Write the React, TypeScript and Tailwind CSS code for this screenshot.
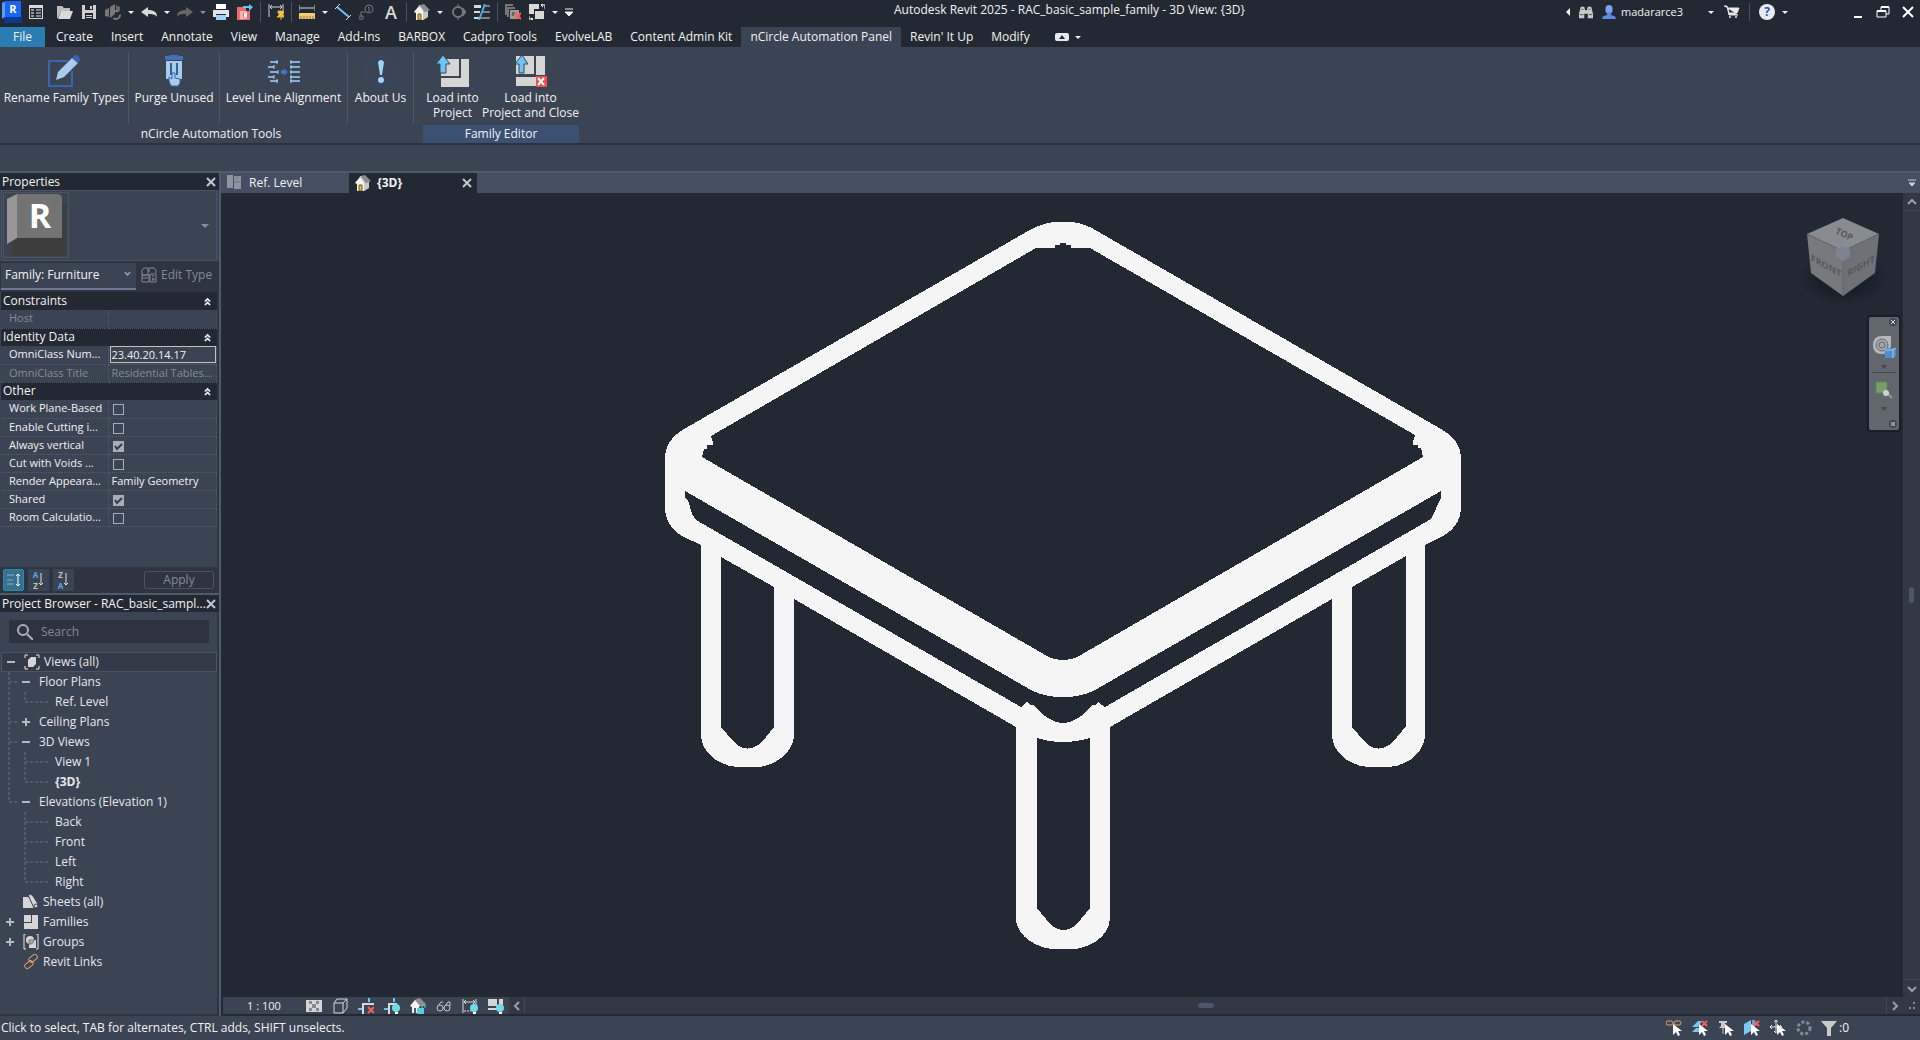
import { ReactNode, useState } from "react";

interface IconProps {
    children: ReactNode;
    box?: string;
    className?: string;
}

function Icon({
    children,
    box = "0 0 16 16",
    className = "w-4 h-4",
}: IconProps) {
    return (
        <svg
            viewBox={box}
            className={`shrink-0 ${className}`}
            fill="none"
            aria-hidden="true"
        >
            {children}
        </svg>
    );
}

const cursor = <path d="M7 4v11l3-3 2 4 2-1-2-4h4z" fill="#fff" />;
const redCross = (
    <path d="M10 9l6 6M16 9l-6 6" stroke="#f4605f" strokeWidth="2" />
);

const HouseIcon = () => (
    <Icon>
        <path d="M0 8l6-7 4-1 6 6-2 1v6l-5 3H3V8z" fill="#8c8c8c" />
        <path d="M0 8l5-6 5 6-1 1v7H2V9z" fill="#f2f2f2" />
        <path d="M5 1l5 7 1 1" stroke="#d5d5d5" />
        <path d="M9 9l5-2v6l-5 3z" fill="#c9c9c9" />
        <path d="M4 10h3v6H4z" fill="#e5b53c" stroke="#6d5a2a" />
    </Icon>
);

const DimensionIcon = () => (
    <>
        <path d="M1 1v14M14 1v7M2 4h11" stroke="#d9d9d9" />
        <path d="M4 2L2 4l2 2M11 2l2 2-2 2" stroke="#d9d9d9" />
    </>
);

const Bulb = () => (
    <>
        <circle cx="12" cy="10" r="4" fill="#6fdbe8" />
        <path d="M11 14h3v2h-3z" fill="#fff" />
    </>
);

type ToolbarItem =
    | { kind: "button"; label: string; icon: ReactNode }
    | { kind: "menu"; label: string; dim?: boolean }
    | { kind: "separator" };

const quickAccess: ToolbarItem[] = [
    {
        kind: "button",
        label: "Open",
        icon: (
            <Icon>
                <path d="M0 2h5l2 2h6v3H4l-3 7H0z" fill="#bdbdbd" />
                <path d="M4 7h12l-3 8H1z" fill="#d9d9d9" />
            </Icon>
        ),
    },
    {
        kind: "button",
        label: "Save",
        icon: (
            <Icon>
                <path d="M1 1h14v14H1z" fill="#d0d0d0" />
                <path d="M4 1h8v5H4zM4 9h8v6H4z" fill="#222933" />
                <path d="M9 2h2v3H9zM5 11h6v1H5zM5 13h6v1H5z" fill="#d0d0d0" />
            </Icon>
        ),
    },
    {
        kind: "button",
        label: "Synchronize",
        icon: (
            <Icon>
                <path d="M0 6l4-2v9l-4-1zM5 3l5-3v10l-5 4z" fill="#777" />
                <path d="M11 1l4 2v4h-4z" fill="#666" />
                <circle
                    cx="11"
                    cy="11"
                    r="4"
                    stroke="#7b7b7b"
                    strokeWidth="2"
                    strokeDasharray="9 3"
                />
            </Icon>
        ),
    },
    { kind: "menu", label: "Synchronize options" },
    {
        kind: "button",
        label: "Undo",
        icon: (
            <Icon>
                <path
                    d="M0 8l7-5v3c6 0 9 2 9 7-2-3-5-3-9-3v3z"
                    fill="#d9d9d9"
                />
            </Icon>
        ),
    },
    { kind: "menu", label: "Undo history" },
    {
        kind: "button",
        label: "Redo",
        icon: (
            <Icon>
                <path d="M16 8L9 3v3c-6 0-9 2-9 7 2-3 5-3 9-3v3z" fill="#666" />
            </Icon>
        ),
    },
    { kind: "menu", label: "Redo history", dim: true },
    {
        kind: "button",
        label: "Print",
        icon: (
            <Icon>
                <path d="M3 0h10v5H3z" fill="#fff" />
                <path d="M0 6h16v7h-3v-3H3v3H0z" fill="#e4e4e4" />
                <path d="M3 11h10v5H3z" fill="#9cd3f8" />
            </Icon>
        ),
    },
    {
        kind: "button",
        label: "Export PDF",
        icon: (
            <Icon>
                <path d="M0 3h9v4h4v9H0z" fill="#f0696b" />
                <path d="M3 8h7M3 10h3M3 12h3M3 14h7" stroke="#fff" />
                <path d="M7 9h3v4H7z" fill="#fff" />
                <path d="M6 2h6V0l4 3-4 4V4H6z" fill="#6cc4f7" />
            </Icon>
        ),
    },
    { kind: "separator" },
    {
        kind: "button",
        label: "Pin dimension",
        icon: (
            <Icon>
                <path d="M1 0v13M15 0v6M2 3h12" stroke="#d0d0d0" />
                <path d="M4 1L2 3l2 2M12 1l2 2-2 2" stroke="#d0d0d0" />
                <path d="M10 7h6v2h-1v2l2 2h-8l2-2V9h-1zM13 12v4" fill="#f3c04e" stroke="#e5b040" />
            </Icon>
        ),
    },
    { kind: "separator" },
    {
        kind: "button",
        label: "Measure",
        icon: (
            <Icon>
                <path d="M0 1v6M16 1v6M1 4h14" stroke="#d9d9d9" />
                <path d="M0 9h16v6H0z" fill="#f4ca72" />
                <path
                    d="M2 12v3M5 12v3M8 12v3M11 12v3M14 12v3"
                    stroke="#8b7347"
                />
            </Icon>
        ),
    },
    { kind: "menu", label: "Measure options" },
    {
        kind: "button",
        label: "Aligned dimension",
        icon: (
            <Icon>
                <path d="M2 3l12 10" stroke="#6cc4f7" strokeWidth="2" />
                <path d="M0 5l5-5M11 16l5-5" stroke="#e0e0e0" />
            </Icon>
        ),
    },
    {
        kind: "button",
        label: "Tag by category",
        icon: (
            <Icon>
                <circle cx="10" cy="5" r="4" stroke="#777" />
                <path d="M9 4l1-1v5M6 8H2v5M0 12h4v3H0z" stroke="#777" />
            </Icon>
        ),
    },
    {
        kind: "button",
        label: "Text",
        icon: (
            <span className="text-lg leading-4 font-semibold text-[#d9d9d9]">
                A
            </span>
        ),
    },
    { kind: "separator" },
    { kind: "button", label: "Default 3D view", icon: <HouseIcon /> },
    { kind: "menu", label: "3D view options" },
    {
        kind: "button",
        label: "Section",
        icon: (
            <Icon>
                <circle cx="8" cy="8" r="5" stroke="#777" strokeWidth="2" />
                <path d="M8 0v3M8 13v3M13 4l3 4-3 4z" fill="#777" stroke="#777" />
            </Icon>
        ),
    },
    {
        kind: "button",
        label: "Thin lines",
        icon: (
            <Icon>
                <path d="M0 1h7v3H0zM0 7h6v2H0zM0 13h5v2H0z" fill="#d9d9d9" />
                <path d="M9 2h7M8 8h8M6 14h10" stroke="#d9d9d9" />
                <path d="M11 0L5 16" stroke="#4aa8e8" strokeWidth="2" />
            </Icon>
        ),
    },
    { kind: "separator" },
    {
        kind: "button",
        label: "Close inactive views",
        icon: (
            <Icon>
                <path d="M1 11V1h7M3 13V4h7" stroke="#777" strokeWidth="2" />
                <path d="M5 6h9v9H5z" fill="#9a9a9a" />
                <path d="M7 9h3M7 11h2" stroke="#333" />
                {redCross}
            </Icon>
        ),
    },
    {
        kind: "button",
        label: "Switch windows",
        icon: (
            <Icon>
                <path d="M0 0h10v5H5v5H0z" fill="#d9d9d9" />
                <path d="M6 7h9v8H6z" fill="#d9d9d9" />
                <path d="M12 1h4v4M14 0l-2 1 2 2M0 12v3h4M2 14l2 1-2 1" stroke="#fff" />
            </Icon>
        ),
    },
    { kind: "menu", label: "Window list" },
];

const ribbonTabs = [
    "Create",
    "Insert",
    "Annotate",
    "View",
    "Manage",
    "Add-Ins",
    "BARBOX",
    "Cadpro Tools",
    "EvolveLAB",
    "Content Admin Kit",
    "nCircle Automation Panel",
    "Revin' It Up",
    "Modify",
];

const automationTools = [
    {
        label: "Rename Family Types",
        width: "w-[129px]",
        icon: (
            <Icon box="0 0 32 32" className="w-8 h-8">
                <path
                    d="M20 6H1v25h23V16"
                    stroke="#3a63b0"
                    strokeWidth="2"
                />
                <path d="M8 25l2-8L24 3l6 5-14 14z" fill="#a8cdec" />
                <path d="M24 3l3-3c3 0 5 2 5 5l-2 3z" fill="#3a63b0" />
            </Icon>
        ),
    },
    {
        label: "Purge Unused",
        width: "w-[91px]",
        icon: (
            <Icon box="0 0 32 32" className="w-8 h-8">
                <path d="M7 1h4l1-1h8l1 1h4v4H7z" fill="#4470bd" />
                <path d="M8 6h16v18H8z" fill="#a8cdec" />
                <path d="M13 8v12M19 8v12" stroke="#3b5f92" strokeWidth="2" />
                <path
                    d="M13 31l-2-5v-4l3 2v-6h3v5l5 1v4l-2 3z"
                    fill="#a8cdec"
                    stroke="#3a63b0"
                />
            </Icon>
        ),
    },
    {
        label: "Level Line Alignment",
        width: "w-[128px]",
        icon: (
            <Icon box="0 0 32 32" className="w-8 h-8">
                <path
                    d="M2 7h8M0 12h6M2 17h8M0 22h6M2 26h8M22 7h10M22 12h10M22 17h10M22 22h10M22 26h10"
                    stroke="#84aed6"
                    strokeWidth="2"
                />
                <path
                    d="M9 5v4M6 10v4M10 15v4M6 20v4M9 24v4M23 5v4M23 10v4M23 15v4M23 20v4M23 24v4"
                    stroke="#a8cdec"
                />
                <path d="M13 15h3v-2l4 4-4 4v-2h-3z" fill="#4470bd" />
            </Icon>
        ),
    },
    {
        label: "About Us",
        width: "w-[66px]",
        icon: (
            <Icon box="0 0 32 32" className="w-8 h-8">
                <circle cx="16" cy="16" r="14" stroke="#2c4a80" />
                <path d="M13 7q3-4 6 0l-2 13h-2z" fill="#9fd4f7" />
                <circle cx="16" cy="25" r="3" fill="#9fd4f7" />
            </Icon>
        ),
    },
];

const familyTools = [
    {
        lines: ["Load into", "Project"],
        width: "w-[59px]",
        icon: (
            <Icon box="0 0 32 32" className="w-8 h-8">
                <path d="M4 4h18v17H4zM24 4h8v28H4v-9h20z" fill="#d5d5d5" />
                <path
                    d="M6 0l7 9H9v9H3V9h-4z"
                    fill="#6cc4f7"
                    stroke="#3b4453"
                />
            </Icon>
        ),
    },
    {
        lines: ["Load into", "Project and Close"],
        width: "w-[97px]",
        icon: (
            <Icon box="0 0 32 32" className="w-8 h-8">
                <path d="M1 1h18v18H1zM21 1h9v19h-9zM1 22h20v9H1z" fill="#d5d5d5" />
                <path
                    d="M7 0l6 9H9v9H4V9H0z"
                    fill="#6cc4f7"
                    stroke="#3b4453"
                />
                <path d="M21 21h11v11H21z" fill="#f04e4a" />
                <path d="M23 23l6 7M29 23l-6 7" stroke="#fff" strokeWidth="2" />
            </Icon>
        ),
    },
];

type Property = {
    name: string;
    value?: string;
    checked?: boolean;
    kind: "text" | "edit" | "readonly" | "check";
};

const propertyGroups: { title: string; rows: Property[] }[] = [
    {
        title: "Constraints",
        rows: [{ name: "Host", value: "", kind: "readonly" }],
    },
    {
        title: "Identity Data",
        rows: [
            { name: "OmniClass Num...", value: "23.40.20.14.17", kind: "edit" },
            {
                name: "OmniClass Title",
                value: "Residential Tables...",
                kind: "readonly",
            },
        ],
    },
    {
        title: "Other",
        rows: [
            { name: "Work Plane-Based", kind: "check" },
            { name: "Enable Cutting i...", kind: "check" },
            { name: "Always vertical", kind: "check", checked: true },
            { name: "Cut with Voids ...", kind: "check" },
            { name: "Render Appeara...", value: "Family Geometry", kind: "text" },
            { name: "Shared", kind: "check", checked: true },
            { name: "Room Calculatio...", kind: "check" },
        ],
    },
];

const viewNodes: {
    label: string;
    level: 1 | 2;
    last?: boolean;
    inside?: boolean;
    open?: boolean;
    bold?: boolean;
}[] = [
    { label: "Floor Plans", level: 1, open: true },
    { label: "Ref. Level", level: 2, last: true, inside: true },
    { label: "Ceiling Plans", level: 1, open: false },
    { label: "3D Views", level: 1, open: true },
    { label: "View 1", level: 2, inside: true },
    { label: "{3D}", level: 2, last: true, inside: true, bold: true },
    { label: "Elevations (Elevation 1)", level: 1, last: true, open: true },
    { label: "Back", level: 2 },
    { label: "Front", level: 2 },
    { label: "Left", level: 2 },
    { label: "Right", level: 2, last: true },
];

const otherNodes: { label: string; expandable: boolean; icon: ReactNode }[] = [
    {
        label: "Sheets (all)",
        expandable: false,
        icon: (
            <Icon>
                <path d="M0 3h5l9 8v3H0z" fill="#d5d5d5" />
                <path d="M5 1q3-2 5 1l5 8v4h-4z" fill="#d5d5d5" stroke="#3b4453" />
                <circle cx="13" cy="12" r="2" stroke="#3b4453" />
            </Icon>
        ),
    },
    {
        label: "Families",
        expandable: true,
        icon: (
            <Icon>
                <path d="M1 1h7v7H1zM9 1h6v14H1V9h8z" fill="#d5d5d5" />
            </Icon>
        ),
    },
    {
        label: "Groups",
        expandable: true,
        icon: (
            <Icon>
                <path d="M3 0H1v15h2M13 0h2v15h-2" stroke="#e8e8e8" />
                <circle cx="7" cy="6" r="4" fill="#d5d5d5" />
                <path d="M6 6h7v8H6z" fill="#d5d5d5" />
                <path d="M6 6h5q0 3-3 4H6z" fill="#aaa" stroke="#777" />
            </Icon>
        ),
    },
    {
        label: "Revit Links",
        expandable: false,
        icon: (
            <Icon>
                <rect x="6" y="2" width="9" height="5" rx="2" stroke="#e0a070" transform="rotate(-40 10 5)" />
                <rect x="1" y="8" width="9" height="5" rx="2" stroke="#e0a070" transform="rotate(-40 6 10)" />
            </Icon>
        ),
    },
];

const viewControls = [
    {
        label: "Detail level",
        icon: (
            <Icon>
                <path d="M0 2h16v12H0z" fill="#d5d5d5" />
                <path d="M3 3h3v3H3zM10 3h3v3h-3zM6 6h4v4H6zM3 10h3v3H3zM10 10h3v3h-3z" fill="#888" />
            </Icon>
        ),
    },
    {
        label: "Visual style",
        icon: (
            <Icon>
                <path d="M2 5h9v10H2zM2 5l3-4h10v9l-4 5M11 5l4-4" stroke="#d9d9d9" />
            </Icon>
        ),
    },
    {
        label: "Crop view",
        icon: (
            <Icon>
                <path d="M5 16V6h11" stroke="#d9d9d9" strokeWidth="2" />
                <path d="M0 11h4M11 0v4" stroke="#6cc4f7" strokeWidth="2" />
                {redCross}
            </Icon>
        ),
    },
    {
        label: "Show crop region",
        icon: (
            <Icon>
                <path d="M5 16V6h8" stroke="#d9d9d9" strokeWidth="2" />
                <path d="M0 11h4M10 0v4" stroke="#6cc4f7" strokeWidth="2" />
                <Bulb />
            </Icon>
        ),
    },
    {
        label: "Locked 3D view",
        icon: (
            <Icon>
                <path d="M0 8l6-7 4-1 6 6-2 2z" fill="#8c8c8c" />
                <path d="M0 8l5-6 5 6-1 1v6H2V9z" fill="#f2f2f2" />
                <path d="M4 10h2v5H4z" fill="#555" />
                <path d="M7 10h7v6H7z" fill="#5ccbe0" />
                <path d="M12 10V7h3v3" stroke="#5ccbe0" />
            </Icon>
        ),
    },
    {
        label: "Temporary hide",
        icon: (
            <Icon>
                <circle cx="4" cy="10" r="3" stroke="#c8c8c8" />
                <circle cx="11" cy="10" r="3" stroke="#c8c8c8" />
                <path d="M2 8l3-4h2M9 8l3-4h2v4M7 10h1" stroke="#c8c8c8" />
            </Icon>
        ),
    },
    {
        label: "Reveal constraints",
        icon: (
            <Icon>
                <DimensionIcon />
                <path d="M2 13h7" stroke="#d9d9d9" strokeDasharray="2 1" />
                <Bulb />
            </Icon>
        ),
    },
    {
        label: "Preview visibility",
        icon: (
            <Icon>
                <path d="M0 1h9v7H0zM11 1h4v7h-4zM0 10h9v2H0z" fill="#d5d5d5" />
                <Bulb />
            </Icon>
        ),
    },
];

const selectionControls = [
    {
        label: "Select links",
        icon: (
            <Icon>
                <rect x="0" y="1" width="7" height="4" rx="2" stroke="#e0a070" />
                <rect x="8" y="1" width="7" height="4" rx="2" stroke="#e0a070" />
                {cursor}
            </Icon>
        ),
    },
    {
        label: "Select underlay elements",
        icon: (
            <Icon>
                <path d="M0 7l6-6h4L6 7zM0 12l4-4h8l-4 4z" fill="#7cc8f4" />
                <path d="M10 1l5 5M15 1l-5 5" stroke="#f4605f" strokeWidth="2" />
                {cursor}
            </Icon>
        ),
    },
    {
        label: "Select pinned elements",
        icon: (
            <Icon>
                <path d="M1 1h8v2H7v3l2 2H1l2-2V3H1z" fill="#c9c9c9" />
                <path d="M5 8v6" stroke="#c9c9c9" />
                {cursor}
            </Icon>
        ),
    },
    {
        label: "Select by face",
        icon: (
            <Icon>
                <path d="M0 4l7-4v11l-7 4z" fill="#7cc8f4" />
                <path d="M8 0h3v9H8z" fill="#5da8d6" />
                <path d="M10 1l5 5M15 1l-5 5" stroke="#f4605f" strokeWidth="2" />
                {cursor}
            </Icon>
        ),
    },
    {
        label: "Drag on selection",
        icon: (
            <Icon>
                <path d="M6 0v13M0 7h12M4 2l2-2 2 2M4 11l2 2M2 5L0 7l2 2M10 5l2 2" stroke="#e8e8e8" />
                {cursor}
            </Icon>
        ),
    },
    {
        label: "Background processes",
        icon: (
            <Icon>
                <circle cx="8" cy="8" r="6" stroke="#858b95" strokeWidth="3" strokeDasharray="3 2" />
            </Icon>
        ),
    },
];

// Closed outlines of the table edges; the inner loops are cut out by the even-odd rule
const tablePath = [
    "M403 12H423Q436 14 447 21L791 219Q811 230 811 249V296Q811 317 791 327L775 335V524C775 545 753 557 738 557H719C704 557 682 545 682 524V389L460 517V708C460 727 438 739 422 739H404C389 739 366 727 366 708V517L144 389V524C144 545 121 557 107 557H88C73 557 51 545 51 524V335L34 327Q15 317 15 296V249Q15 230 34 219L378 21Q390 14 403 12Z",
    "M386 38H405V35H410V33H416V35H421V38H440L765 225L763 232V235H768V238H771L773 247L429 446Q413 454 397 446L52 247L54 239H57V235H63V232L61 226Z",
    "M35 281L381 480Q394 487 413 487Q432 487 445 480L791 281V288L781 309L455 497L448 492L445 495H442L437 501Q424 513 413 513Q402 513 389 501L384 495H380L377 492L371 497L46 310L42 304L38 290L35 288Z",
    "M71 347L124 377V517L112 532Q97 545 84 532L71 517Z",
    "M387 528Q413 536 440 528V698L427 714Q413 726 400 714L387 698Z",
    "M702 377L756 346V516L743 532Q728 545 715 532L702 517Z",
].join("");

function Caret({ dim = false }: { dim?: boolean }) {
    return (
        <Icon box="0 0 8 4" className="w-[6px] h-[3px]">
            <path d="M0 0h8L4 4z" fill={dim ? "#8a8f96" : "#f0f0f0"} />
        </Icon>
    );
}

function CloseIcon() {
    return (
        <Icon box="0 0 10 10" className="w-[10px] h-[10px]">
            <path d="M1 1l8 8M9 1L1 9" stroke="#c3c8cf" strokeWidth="2" />
        </Icon>
    );
}

function AppLogo() {
    return (
        <svg viewBox="0 0 24 24" className="w-6 h-6 shrink-0">
            <path d="M4 14h18v9H4z" fill="#0a3a8c" />
            <path d="M2 3l4-2v15l-4 3z" fill="#5a9bf8" />
            <path d="M5 1h16v16H5z" fill="#1a66f0" />
            <text
                x="13"
                y="13"
                textAnchor="middle"
                fontSize="11"
                fontWeight="700"
                fill="#fff"
            >
                R
            </text>
        </svg>
    );
}

function TitleBar() {
    return (
        <header className="flex h-[27px] items-center pb-[3px]">
            <AppLogo />
            <button
                aria-label="Home"
                className="flex w-6 mr-[5px] justify-center"
            >
                <Icon>
                    <path d="M1 1h14v14H1z" fill="#d9d9d9" />
                    <path d="M2 4h12v10H2z" fill="#222933" />
                    <path d="M3 5h3v2H3zM3 8h3v2H3zM3 11h3v2H3z" fill="#999" />
                    <path d="M8 6h5M8 9h5M8 12h5" stroke="#e8e8e8" />
                </Icon>
            </button>
            {quickAccess.map((item, index) => {
                if (item.kind === "separator") {
                    return (
                        <span
                            key={index}
                            className="flex w-[7px] justify-center"
                        >
                            <span className="w-px h-5 bg-[#46505f]"></span>
                        </span>
                    );
                }
                if (item.kind === "menu") {
                    return (
                        <button
                            key={index}
                            aria-label={item.label}
                            className="flex w-3 h-4 items-center justify-center"
                        >
                            <Caret dim={item.dim} />
                        </button>
                    );
                }
                return (
                    <button
                        key={index}
                        aria-label={item.label}
                        className="flex w-6 h-5 items-center justify-center"
                    >
                        {item.icon}
                    </button>
                );
            })}
            <button
                aria-label="Customize toolbar"
                className="flex w-4 justify-center"
            >
                <Icon box="0 0 8 8" className="w-2 h-2">
                    <path d="M0 1h8M0 4h8L4 8z" fill="#f0f0f0" stroke="#f0f0f0" />
                </Icon>
            </button>
            <h1 className="flex-1 pb-1 text-center text-xs">
                Autodesk Revit 2025 - RAC_basic_sample_family - 3D View: {"{3D}"}
            </h1>
            <div className="flex items-center">
                <button aria-label="Collapse" className="flex w-3 justify-center">
                    <Icon box="0 0 4 8" className="w-1 h-2">
                        <path d="M4 0v8L0 4z" fill="#f0f0f0" />
                    </Icon>
                </button>
                <button aria-label="Search" className="flex w-6 justify-center">
                    <Icon className="w-[14px] h-[14px]">
                        <path d="M2 2h4l1 4h2l1-4h4l2 8v5h-6v-5H6v5H0v-5z" fill="#c9c9c9" />
                        <path d="M3 5h2M11 5h2M1 11h4M11 11h4" stroke="#444" />
                    </Icon>
                </button>
                <button className="flex items-center gap-[5px] pl-1">
                    <Icon className="w-[14px] h-[14px]">
                        <rect x="4" y="0" width="8" height="10" rx="4" fill="#7ba2f5" />
                        <path d="M0 16l1-3 5-2V8h4v3l5 2 1 3z" fill="#5f88e8" />
                    </Icon>
                    <span className="w-[62px] text-left text-[11px] whitespace-nowrap">
                        madararce3
                    </span>
                    <span className="flex w-[34px] justify-end pr-2">
                        <Caret />
                    </span>
                </button>
                <button aria-label="Store" className="flex w-5 justify-center">
                    <Icon>
                        <path d="M0 2h3l2 9h9M4 4h11l-2 5H5z" fill="#e8e8e8" stroke="#e8e8e8" />
                        <circle cx="6" cy="13" r="1" fill="#e8e8e8" />
                        <circle cx="12" cy="13" r="1" fill="#e8e8e8" />
                    </Icon>
                </button>
                <span className="mx-[7px] w-px h-[18px] bg-[#46505f]"></span>
                <button aria-label="Help" className="ml-[2px] flex w-4 h-4 items-center justify-center rounded-full bg-[#e8ebf0] text-xs font-bold text-[#2456b8]">
                    ?
                </button>
                <button aria-label="Help options" className="flex w-5 justify-center">
                    <Caret />
                </button>
            </div>
            <div className="flex ml-[50px]">
                <button aria-label="Minimize" className="flex w-[25px] h-4 justify-center">
                    <Icon>
                        <path d="M4 13h8" stroke="#fff" strokeWidth="2" />
                    </Icon>
                </button>
                <button aria-label="Restore" className="flex w-[25px] h-4 justify-center">
                    <Icon>
                        <path d="M6 6V3h8v7h-3M2 7h9v6H2z" stroke="#fff" strokeWidth="1" />
                        <path d="M6 3h8M2 7h9" stroke="#fff" strokeWidth="2" />
                    </Icon>
                </button>
                <button aria-label="Close" className="flex w-[25px] h-4 justify-center">
                    <Icon>
                        <path d="M3 3l10 10M13 3L3 13" stroke="#fff" strokeWidth="2" />
                    </Icon>
                </button>
            </div>
        </header>
    );
}

function RibbonTabs() {
    const [active, setActive] = useState("nCircle Automation Panel");

    return (
        <nav className="flex h-5 text-[12px] leading-5">
            <button className="w-[45px] mr-[2px] bg-[#2a7db3]">File</button>
            {ribbonTabs.map((tab) => (
                <button
                    key={tab}
                    onClick={() => setActive(tab)}
                    className={`px-[9px] whitespace-nowrap ${
                        tab === active ? "bg-[#3b4453]" : ""
                    }`}
                >
                    {tab}
                </button>
            ))}
            <button
                aria-label="Minimize ribbon"
                className="flex items-center gap-[6px] ml-4"
            >
                <Icon box="0 0 14 8" className="w-[14px] h-2">
                    <rect width="14" height="8" rx="2" fill="#e8e8f0" />
                    <path d="M4 6l3-4 3 4z" fill="#222933" />
                </Icon>
                <Caret />
            </button>
        </nav>
    );
}

function Ribbon() {
    return (
        <div className="flex h-[98px] border-b-2 border-[#2b323d] bg-[#3b4453] pt-1">
            <section className="flex flex-col">
                <div className="flex h-[74px] py-px">
                    {automationTools.map((tool) => (
                        <button
                            key={tool.label}
                            className={`flex flex-col items-center pt-[3px] border-r border-[#4d5767] whitespace-nowrap text-[12px] leading-[15px] ${tool.width}`}
                        >
                            {tool.icon}
                            <span className="mt-[3px]">{tool.label}</span>
                        </button>
                    ))}
                </div>
                <h2 className="pl-2 text-center text-[12px] leading-[17px]">
                    nCircle Automation Tools
                </h2>
            </section>
            <section className="flex flex-col ml-[9px]">
                <div className="flex h-[74px] py-px">
                    {familyTools.map((tool) => (
                        <button
                            key={tool.lines[1]}
                            className={`flex flex-col items-center pt-[3px] whitespace-nowrap text-[12px] leading-[15px] ${tool.width}`}
                        >
                            {tool.icon}
                            <span className="mt-[3px]">{tool.lines[0]}</span>
                            <span>{tool.lines[1]}</span>
                        </button>
                    ))}
                </div>
                <h2 className="bg-[#3b5172] text-center text-[12px] leading-[18px]">
                    Family Editor
                </h2>
            </section>
        </div>
    );
}

function PanelTitle({ children }: { children: ReactNode }) {
    return (
        <div className="flex h-[17px] shrink-0 items-center justify-between bg-[#222933] pl-[2px] pr-[3px]">
            <h2 className="text-[12px] leading-[17px] whitespace-nowrap">
                {children}
            </h2>
            <button aria-label="Close panel">
                <CloseIcon />
            </button>
        </div>
    );
}

function PropertyCheckbox({ row }: { row: Property }) {
    const [checked, setChecked] = useState(row.checked ?? false);

    return (
        <span className="relative block w-[11px] h-[11px] mt-1 ml-[3px]">
            <input
                type="checkbox"
                aria-label={row.name}
                checked={checked}
                onChange={(e) => setChecked(e.target.checked)}
                className="block w-[11px] h-[11px] appearance-none border border-[#a9adb8] checked:bg-[#a9adb8]"
            />
            {checked && (
                <svg
                    viewBox="0 0 11 11"
                    fill="none"
                    className="pointer-events-none absolute inset-0"
                >
                    <path d="M2 5l2 3 5-5" stroke="#333a47" strokeWidth="2" />
                </svg>
            )}
        </span>
    );
}

function PropertyValue({ row }: { row: Property }) {
    if (row.kind === "check") {
        return <PropertyCheckbox row={row} />;
    }
    if (row.kind === "edit") {
        return (
            <input
                aria-label={row.name}
                defaultValue={row.value}
                className="block w-full h-[17px] border border-[#c9c3ae] px-px text-[11px]"
            />
        );
    }
    return <span className="block pl-[2px]">{row.value}</span>;
}

function SortButton({
    first,
    second,
    label,
}: {
    first: string;
    second: string;
    label: string;
}) {
    return (
        <button
            aria-label={label}
            className="flex w-[21px] h-[22px] items-center justify-center bg-[#3b4453]"
        >
            <span className="flex flex-col text-[8px] leading-[11px] font-bold">
                <span className={first === "A" ? "text-[#5da8e0]" : "text-[#c0c0c0]"}>
                    {first}
                </span>
                <span className={second === "A" ? "text-[#5da8e0]" : "text-[#c0c0c0]"}>
                    {second}
                </span>
            </span>
            <Icon box="0 0 6 14" className="w-[6px] h-[14px]">
                <path d="M3 0v12M1 10l2 2 2-2" stroke="#e0e0e0" />
            </Icon>
        </button>
    );
}

function PropertiesPanel() {
    return (
        <section>
            <PanelTitle>Properties</PanelTitle>
            <div className="ml-px mr-[2px] flex h-[71px] items-start justify-between border border-[#4a5464] pl-px pr-[7px]">
                <div className="mt-px border border-[#4a5464]">
                    <svg viewBox="0 0 64 64" className="w-16 h-16">
                        <path d="M8 12h54v50q0 1-1 1H10q-2 0-2-2z" fill="#3d3d3d" />
                        <path d="M3 6l10-5v44L3 51z" fill="#979797" />
                        <path d="M13 1h40q5 0 5 5v39H13z" fill="#737373" />
                        <text
                            x="36"
                            y="35"
                            textAnchor="middle"
                            fontSize="34"
                            fontWeight="700"
                            fill="#fff"
                        >
                            R
                        </text>
                    </svg>
                </div>
                <button aria-label="Type selector" className="self-center">
                    <Icon box="0 0 8 4" className="w-2 h-1">
                        <path d="M0 0h8L4 4z" fill="#7f8fa6" />
                    </Icon>
                </button>
            </div>
            <div className="flex h-[31px] bg-[#2e3541]">
                <div className="relative ml-px h-[27px] w-[135px]">
                    <select
                        aria-label="Family"
                        className="h-full w-full appearance-none border-b-2 border-[#6d7b8e] bg-[#3b4453] pl-1 text-[12px]"
                    >
                        <option>Family: Furniture</option>
                    </select>
                    <Icon
                        box="0 0 8 6"
                        className="pointer-events-none absolute right-[5px] top-[10px] w-[7px] h-[6px]"
                    >
                        <path d="M1 1l3 3 3-3" stroke="#8fa0b8" strokeWidth="2" />
                    </Icon>
                </div>
                <button
                    disabled
                    className="flex flex-1 items-center gap-1 pl-[5px] pb-1 text-[12px] text-[#858a93] whitespace-nowrap"
                >
                    <Icon>
                        <path d="M1 8V3l2-2h4v7zM8 5V1h5l2 2v3M1 8h7v7H1zM1 11h6M9 7h6v8H9z" stroke="#858a93" />
                        <path d="M11 9h2M12 11v3M11 12h3" stroke="#858a93" />
                    </Icon>
                    Edit Type
                </button>
            </div>
            <div className="h-[275px] border-r-2 border-[#2e3541] bg-[#3b4453] pl-px">
                <table className="w-full table-fixed border-collapse text-[11px] leading-[16px]">
                    <colgroup>
                        <col className="w-[107px]" />
                        <col />
                    </colgroup>
                    {propertyGroups.map((group) => (
                        <tbody key={group.title}>
                            <tr className="h-[18px] bg-[#222933]">
                                <th
                                    colSpan={2}
                                    className="p-0 pl-[2px] text-left text-[12px] font-normal"
                                >
                                    <div className="flex items-center justify-between pr-[6px]">
                                        {group.title}
                                        <button aria-label="Collapse group">
                                            <Icon box="0 0 8 10" className="w-[7px] h-[9px]">
                                                <path d="M1 5l3-3 3 3M1 9l3-3 3 3" stroke="#f0f0f0" strokeWidth="2" />
                                            </Icon>
                                        </button>
                                    </div>
                                </th>
                            </tr>
                            {group.rows.map((row) => (
                                <tr
                                    key={row.name}
                                    className={`h-[18px] ${
                                        row.kind === "readonly"
                                            ? "text-[#868c96]"
                                            : ""
                                    }`}
                                >
                                    <td className="border-r border-b border-dotted border-[#525c6b] p-0 pl-2 align-top whitespace-nowrap">
                                        {row.name}
                                    </td>
                                    <td className="border-r border-b border-dotted border-[#525c6b] p-0 pl-px align-top whitespace-nowrap">
                                        <PropertyValue row={row} />
                                    </td>
                                </tr>
                            ))}
                        </tbody>
                    ))}
                </table>
            </div>
            <div className="flex h-[26px] items-center gap-1 bg-[#2e3541] pl-[3px] pr-[5px]">
                <button
                    aria-label="Sort by group"
                    className="flex w-[21px] h-[22px] items-center justify-center rounded-xs border border-[#2f86b0] bg-[#36718f]"
                >
                    <Icon>
                        <path d="M1 3h7M1 8h6M1 12h7" stroke="#8fb0c0" />
                        <path d="M12 2v12M10 4l2-2 2 2M10 12l2 2 2-2" stroke="#fff" />
                    </Icon>
                </button>
                <SortButton first="A" second="Z" label="Sort ascending" />
                <SortButton first="Z" second="A" label="Sort descending" />
                <button
                    disabled
                    className="ml-auto h-[18px] w-[70px] rounded-xs border border-[#4a5464] text-[12px] leading-4 text-[#858a93]"
                >
                    Apply
                </button>
            </div>
        </section>
    );
}

function Toggle({ open }: { open: boolean }) {
    return (
        <button
            aria-label={open ? "Collapse" : "Expand"}
            className="flex w-[10px] h-[10px]"
        >
            <Icon box="0 0 10 10" className="w-[10px] h-[10px]">
                <path
                    d={open ? "M1 5h8" : "M1 5h8M5 1v8"}
                    stroke="#b4b9c2"
                    strokeWidth="2"
                />
            </Icon>
        </button>
    );
}

function ProjectBrowser() {
    return (
        <section className="flex min-h-0 flex-1 flex-col border-t-2 border-[#4f5b6a]">
            <PanelTitle>Project Browser - RAC_basic_sampl...</PanelTitle>
            <div className="flex min-h-0 flex-1 flex-col border-r-2 border-b-2 border-[#2e3541] pl-px">
                <label className="mx-2 mt-2 flex h-[23px] shrink-0 items-center bg-[#2d343f] pl-2">
                    <Icon>
                        <circle cx="6" cy="6" r="5" stroke="#a9adb8" strokeWidth="2" />
                        <path d="M10 10l6 6" stroke="#a9adb8" strokeWidth="2" />
                    </Icon>
                    <input
                        type="search"
                        placeholder="Search"
                        aria-label="Search project browser"
                        className="min-w-0 flex-1 pl-2 text-[12px] placeholder:text-[#858a93]"
                    />
                </label>
                <ul className="mt-[9px] text-[12px] leading-5 text-[#e6e8eb]">
                    <li className="flex h-5 items-center border border-[#4a5464] bg-[#343b48] pl-1">
                        <Toggle open />
                        <span className="flex ml-2 mr-1">
                            <Icon>
                                <path d="M4 1H1v3M12 1h3v3M4 15H1v-3M12 15h3v-3" stroke="#e8e8e8" />
                                <path d="M4 6l3-3h5v7l-3 3H4z" fill="#d5d5d5" />
                            </Icon>
                        </span>
                        Views (all)
                    </li>
                    {viewNodes.map((node) =>
                        node.level === 1 ? (
                            <li key={node.label} className="flex h-5 items-center">
                                <Icon box="0 0 20 20" className="w-5 h-5">
                                    <path
                                        d={node.last ? "M8 0v10h9" : "M8 0v20M8 10h9"}
                                        stroke="#68707d"
                                        strokeDasharray="3 2"
                                    />
                                </Icon>
                                <Toggle open={node.open ?? false} />
                                <span className="pl-2">{node.label}</span>
                            </li>
                        ) : (
                            <li key={node.label} className="flex h-5 items-center">
                                <Icon box="0 0 52 20" className="w-[52px] h-5">
                                    <path
                                        d={`${node.inside ? "M8 0v20" : ""}${
                                            node.last
                                                ? "M24 0v10h24"
                                                : "M24 0v20M24 10h24"
                                        }`}
                                        stroke="#68707d"
                                        strokeDasharray="3 2"
                                    />
                                </Icon>
                                <span
                                    className={`pl-[2px] ${
                                        node.bold ? "font-bold" : ""
                                    }`}
                                >
                                    {node.label}
                                </span>
                            </li>
                        )
                    )}
                    {otherNodes.map((node) => (
                        <li key={node.label} className="flex h-5 items-center pl-1">
                            <span className="flex w-[10px]">
                                {node.expandable && <Toggle open={false} />}
                            </span>
                            <span className="flex ml-2 mr-1">{node.icon}</span>
                            {node.label}
                        </li>
                    ))}
                </ul>
            </div>
        </section>
    );
}

function ViewTabs() {
    return (
        <div className="flex h-5 bg-[#454f61] text-[12px]">
            <button className="flex w-32 items-center pl-[6px]">
                <Icon>
                    <path d="M0 0h6v13H0zM7 1h7v13H7z" fill="#8f94a0" />
                    <path d="M10 1v3M7 7h7" stroke="#6a7180" />
                </Icon>
                <span className="pl-[6px]">Ref. Level</span>
            </button>
            <div className="flex w-32 items-center bg-[#222933] pl-[6px] pr-[5px]">
                <button className="flex flex-1 items-center gap-[6px] font-bold">
                    <HouseIcon />
                    {"{3D}"}
                </button>
                <button aria-label="Close view">
                    <CloseIcon />
                </button>
            </div>
            <button
                aria-label="Tab list"
                className="ml-auto flex w-4 items-center justify-center"
            >
                <Icon box="0 0 8 8" className="w-2 h-2">
                    <path d="M0 1h8M1 4h6L4 7z" fill="#c9cdd4" stroke="#c9cdd4" />
                </Icon>
            </button>
        </div>
    );
}

function ViewCube() {
    return (
        <svg
            viewBox="0 0 100 110"
            className="absolute right-[10px] top-[14px] w-[100px] h-[110px]"
        >
            <defs>
                <radialGradient id="shade">
                    <stop offset="0" stopColor="#10151c" />
                    <stop offset="1" stopColor="#222933" />
                </radialGradient>
            </defs>
            <ellipse cx="50" cy="72" rx="44" ry="26" fill="url(#shade)" />
            <path d="M50 11l36 16-36 17-36-17z" fill="#888b90" />
            <path d="M14 27l36 17v45L18 66z" fill="#77797d" />
            <path d="M86 27L50 44v45l32-23z" fill="#6e7175" />
            <path
                d="M14 27l36 17 36-17M50 44v45"
                fill="none"
                stroke="#5e6165"
                strokeDasharray="3 1"
            />
            <path d="M50 39l7 3v8l-7 4-7-4v-8z" fill="#7c8494" />
            <g fill="#55585d" fontWeight="700" textAnchor="middle">
                <text fontSize="9" transform="translate(50 30) rotate(25)">
                    TOP
                </text>
                <text fontSize="9" transform="translate(33 62) skewY(29)">
                    FRONT
                </text>
                <text fontSize="9" transform="translate(68 62) skewY(-29)">
                    RIGHT
                </text>
            </g>
        </svg>
    );
}

function NavigationBar() {
    return (
        <div className="absolute right-[2px] top-[122px] flex w-[34px] h-[117px] flex-col items-center rounded-sm border-2 border-[#191f28] bg-[#62666d]">
            <button aria-label="Close navigation bar" className="ml-auto mr-[2px] mt-px flex">
                <Icon box="0 0 8 8" className="w-2 h-2">
                    <circle cx="4" cy="4" r="4" fill="#44484e" />
                    <path d="M2 2l4 4M6 2L2 6" stroke="#ddd" />
                </Icon>
            </button>
            <button aria-label="Steering wheel" className="mt-[9px] flex">
                <Icon box="0 0 24 24" className="w-6 h-6">
                    <path d="M1 10Q1 1 10 1h9v9q0 9-9 9T1 10z" fill="#b5b7bd" />
                    <circle cx="10" cy="10" r="6" fill="#a2a4ab" stroke="#666a70" />
                    <circle cx="10" cy="10" r="3" stroke="#666a70" />
                    <path d="M13 15l3-2h8v8l-3 2h-8z" fill="#4c8fd0" />
                    <path d="M13 15h8v8M21 15l3-2" stroke="#a8cdec" />
                </Icon>
            </button>
            <span className="mt-[6px] flex">
                <Icon box="0 0 6 4" className="w-[6px] h-1">
                    <path d="M0 0h6L3 4z" fill="#44484e" />
                </Icon>
            </span>
            <span className="mt-[3px] h-px w-6 bg-[#44484e]"></span>
            <button aria-label="Zoom region" className="mt-2 flex">
                <Icon box="0 0 18 18" className="w-[18px] h-[18px]">
                    <path d="M1 1h11v11H1z" fill="#7a9b6c" stroke="#4f9048" />
                    <path d="M12 12l5 5" stroke="#999" strokeWidth="2" />
                    <circle cx="11" cy="12" r="3" fill="#d0d0d0" />
                </Icon>
            </button>
            <span className="mt-2 flex">
                <Icon box="0 0 6 4" className="w-[6px] h-1">
                    <path d="M0 0h6L3 4z" fill="#44484e" />
                </Icon>
            </span>
            <button aria-label="Navigation options" className="ml-auto mr-[2px] mt-auto mb-[2px] flex">
                <Icon box="0 0 8 8" className="w-2 h-2">
                    <circle cx="4" cy="4" r="4" fill="#44484e" />
                    <path d="M2 3h4M2 5h4" stroke="#ddd" />
                </Icon>
            </button>
        </div>
    );
}

function Chevron({ d }: { d: string }) {
    return (
        <Icon box="0 0 10 10" className="w-[10px] h-[10px]">
            <path d={d} stroke="#9aa0aa" strokeWidth="2" />
        </Icon>
    );
}

function ModelView() {
    return (
        <div className="flex min-h-0 flex-1">
            <div className="relative flex min-w-0 flex-1 justify-center">
                <svg
                    viewBox="0 0 824 750"
                    className="mt-[17px] h-[750px] w-[824px]"
                    shapeRendering="crispEdges"
                >
                    <path d={tablePath} fill="#f5f5f5" fillRule="evenodd" />
                </svg>
                <ViewCube />
                <NavigationBar />
            </div>
            <div className="flex w-[17px] flex-col items-center justify-between bg-[#323944]">
                <button aria-label="Scroll up" className="flex h-[18px] w-full items-center justify-center border-b border-[#3f4a58]">
                    <Chevron d="M1 7l4-4 4 4" />
                </button>
                <span className="h-4 w-[5px] rounded-full bg-[#4d5767]"></span>
                <button aria-label="Scroll down" className="flex h-[18px] w-full items-center justify-center border-t border-[#3f4a58]">
                    <Chevron d="M1 3l4 4 4-4" />
                </button>
            </div>
        </div>
    );
}

function ViewControlBar() {
    return (
        <div className="flex h-[17px] items-center bg-[#323944] ml-[2px]">
            <div className="flex h-full items-center bg-[#3b4453]">
                <button className="w-[78px] pl-6 text-left text-[11px] leading-4">
                    1 : 100
                </button>
                {viewControls.map((control) => (
                    <button
                        key={control.label}
                        aria-label={control.label}
                        className="flex w-[26px] justify-center"
                    >
                        {control.icon}
                    </button>
                ))}
            </div>
            <button aria-label="Scroll left" className="flex h-full w-4 items-center justify-center border-r border-[#3f4a58]">
                <Chevron d="M7 1L3 5l4 4" />
            </button>
            <div className="flex flex-1 justify-center">
                <span className="h-[5px] w-4 rounded-full bg-[#4d5767]"></span>
            </div>
            <button aria-label="Scroll right" className="flex h-full w-[17px] items-center justify-center border-l border-[#3f4a58]">
                <Chevron d="M3 1l4 4-4 4" />
            </button>
            <span className="flex w-[17px] justify-center">
                <Icon box="0 0 8 8" className="w-2 h-2">
                    <path d="M5 0h2v2H5zM5 5h2v2H5zM1 5h2v2H1z" fill="#858a93" />
                </Icon>
            </span>
        </div>
    );
}

function StatusBar() {
    return (
        <footer className="flex h-6 items-center bg-[#3b4453] pl-px pr-[71px] text-[12px]">
            <p className="flex-1">
                Click to select, TAB for alternates, CTRL adds, SHIFT unselects.
            </p>
            {selectionControls.map((control) => (
                <button
                    key={control.label}
                    aria-label={control.label}
                    className="flex w-[26px] justify-center"
                >
                    {control.icon}
                </button>
            ))}
            <button className="flex items-center pl-1">
                <Icon>
                    <path d="M0 1h16L10 8v8H6V8z" fill="#c9c9c9" />
                </Icon>
                <span className="pl-[2px]">:0</span>
            </button>
        </footer>
    );
}

export default function App() {
    return (
        <div className="flex h-screen flex-col overflow-hidden bg-[#222933] font-['Open_Sans','Noto_Sans',sans-serif] text-[#f2f2f2]">
            <TitleBar />
            <RibbonTabs />
            <Ribbon />
            <div className="h-[28px] shrink-0 border-b-2 border-[#4f5b6a] bg-[#3b4453]"></div>
            <div className="flex min-h-0 flex-1">
                <aside className="flex w-[221px] shrink-0 flex-col border-r-2 border-[#4f5b6a] bg-[#3b4453]">
                    <PropertiesPanel />
                    <ProjectBrowser />
                </aside>
                <main className="flex min-w-0 flex-1 flex-col pb-[2px]">
                    <ViewTabs />
                    <ModelView />
                    <ViewControlBar />
                </main>
            </div>
            <StatusBar />
        </div>
    );
}
